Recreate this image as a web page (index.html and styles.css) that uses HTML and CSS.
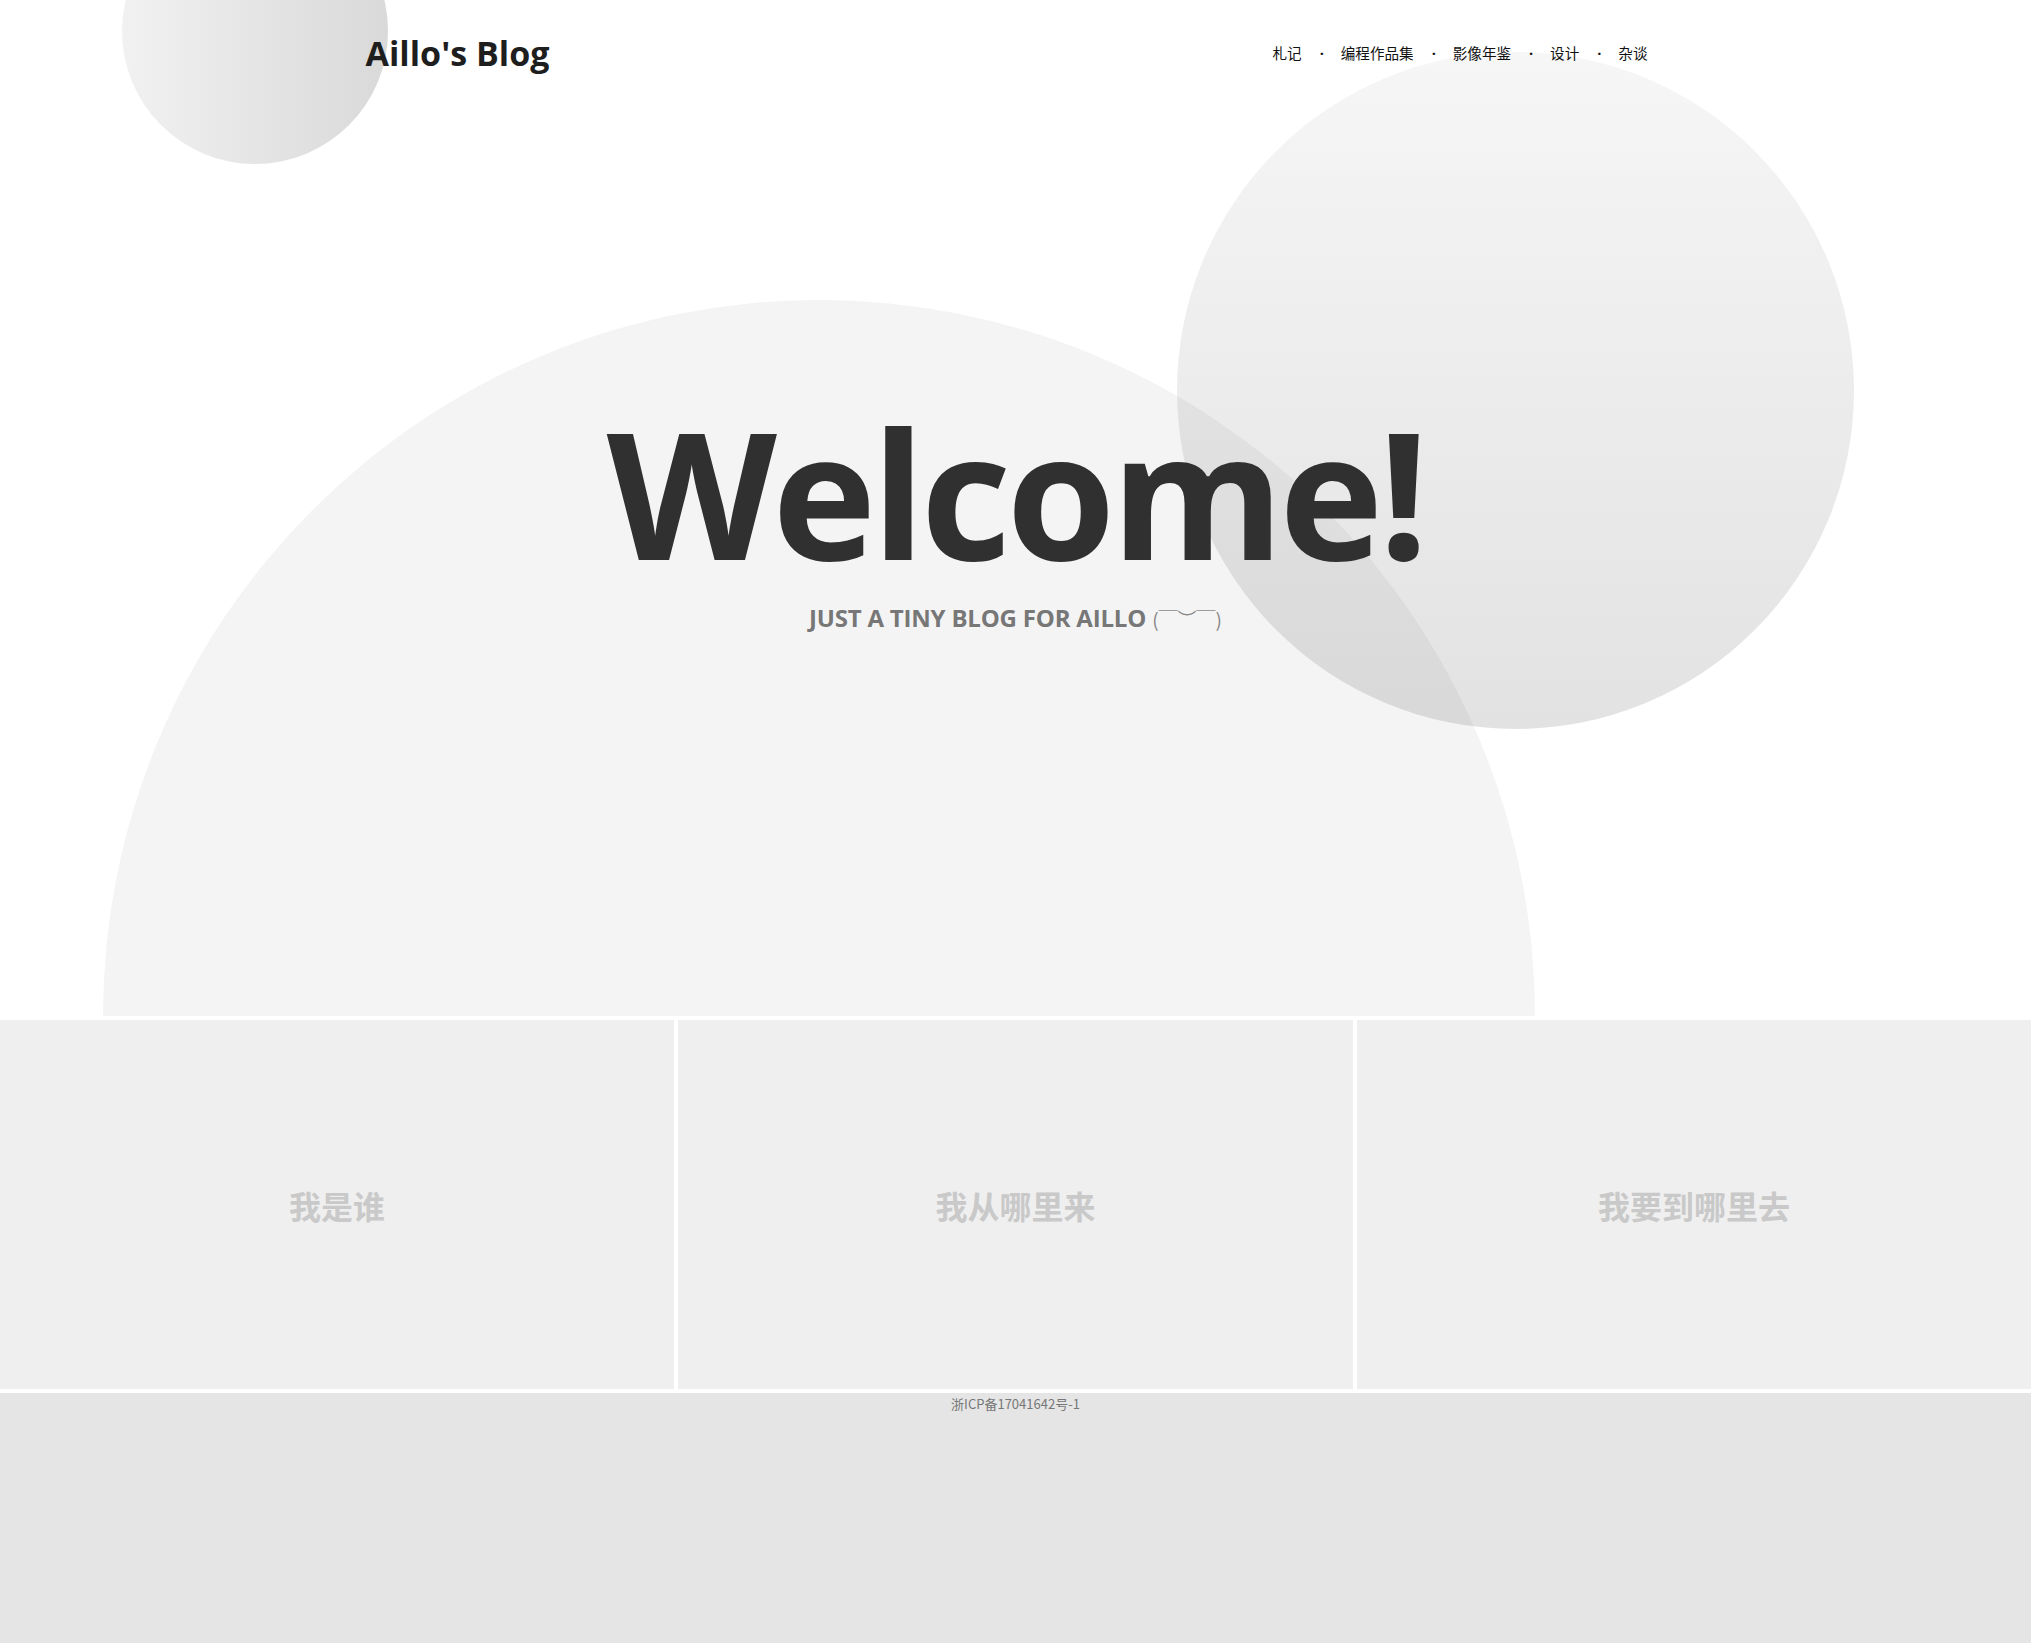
FILE: index.html
```html
<!DOCTYPE html>
<html lang="zh-CN">
<head>
<meta charset="utf-8">
<title>Aillo's Blog</title>
<link rel="stylesheet" href="styles.css">
</head>
<body>
<div class="hero">
  <div class="deco circle-small"></div>
  <div class="deco half"></div>
  <div class="deco circle-big"></div>
  <header class="topbar">
    <h1 class="logo">Aillo's Blog</h1>
    <nav class="nav">
      <a class="nav-item" href="#">札记</a><span class="sep">·</span>
      <a class="nav-item" href="#">编程作品集</a><span class="sep">·</span>
      <a class="nav-item" href="#">影像年鉴</a><span class="sep">·</span>
      <a class="nav-item" href="#">设计</a><span class="sep">·</span>
      <a class="nav-item" href="#">杂谈</a>
    </nav>
  </header>
  <div class="welcome">
    <h2 class="welcome-title">Welcome!</h2>
    <p class="welcome-sub">JUST A TINY BLOG FOR AILLO <span class="kao">(￣︶￣)</span></p>
  </div>
</div>
<section class="panels">
  <div class="panel">我是谁</div>
  <div class="panel">我从哪里来</div>
  <div class="panel">我要到哪里去</div>
</section>
<footer class="footer">浙ICP备17041642号-1</footer>
</body>
</html>
```
FILE: styles.css
```css
html, body {
  margin: 0;
  padding: 0;
  background: #ffffff;
}
body {
  font-family: "Open Sans", "Noto Sans CJK SC", sans-serif;
  overflow: hidden;
}
.hero {
  position: relative;
  height: 1016px;
  margin-bottom: 4px;
  overflow: hidden;
}
.deco {
  position: absolute;
  border-radius: 50%;
}
.circle-small {
  left: 122px;
  top: -102px;
  width: 266px;
  height: 266px;
  background: linear-gradient(to right, #f1f1f1, #d9d9d9);
}
.half {
  left: 103px;
  top: 300px;
  width: 1432px;
  height: 716px;
  border-radius: 716px 716px 0 0;
  background: #f4f4f4;
}
.circle-big {
  left: 1177px;
  top: 52px;
  width: 677px;
  height: 677px;
  background: linear-gradient(to bottom, rgba(0,0,0,0.035), rgba(0,0,0,0.115));
}
.topbar {
  position: relative;
  z-index: 2;
  width: 1300px;
  margin: 0 auto;
  padding-top: 33px;
  display: flex;
  justify-content: space-between;
  align-items: center;
}
.logo {
  margin: 0;
  font-family: "Open Sans", sans-serif;
  font-weight: 700;
  font-size: 34px;
  line-height: 40px;
  color: #1e1e1e;
}
.nav {
  display: flex;
  align-items: center;
  margin-right: 18px;
  font-family: "Noto Sans CJK SC", sans-serif;
  font-size: 14.6px;
  line-height: 20px;
}
.nav-item {
  color: #111;
  text-decoration: none;
}
.sep {
  display: inline-block;
  width: 4px;
  margin: 0 17px 0 18px;
  text-align: center;
  font-family: "Open Sans", sans-serif;
  font-weight: 700;
  color: #111;
}
.welcome {
  position: relative;
  z-index: 2;
  text-align: center;
}
.welcome-title {
  margin: 331px 0 0;
  font-family: "Open Sans", sans-serif;
  font-weight: 700;
  font-size: 176px;
  line-height: 176px;
  letter-spacing: -4.6px;
  color: #303030;
}
.welcome-sub {
  margin: 23px 0 0;
  font-family: "Open Sans", sans-serif;
  font-weight: 700;
  font-size: 24px;
  line-height: 29px;
  letter-spacing: -0.2px;
  color: #777;
}
.kao {
  font-family: "Noto Sans CJK SC", sans-serif;
  font-weight: 400;
  font-size: 19px;
  line-height: 20px;
  letter-spacing: 0;
  color: #888;
}
.panels {
  display: grid;
  grid-template-columns: 674px 675px 674px;
  column-gap: 4px;
  margin-bottom: 4px;
}
.panel {
  height: 369px;
  background: #efefef;
  display: flex;
  align-items: center;
  justify-content: center;
  font-family: "Noto Sans CJK SC", sans-serif;
  font-weight: 700;
  font-size: 32px;
  color: #c9c9c9;
}
.footer {
  height: 250px;
  background: #e5e5e5;
  text-align: center;
  padding-top: 1px;
  box-sizing: border-box;
  font-family: "Noto Sans CJK SC", sans-serif;
  font-size: 13px;
  line-height: 20px;
  color: #777;
}
```
